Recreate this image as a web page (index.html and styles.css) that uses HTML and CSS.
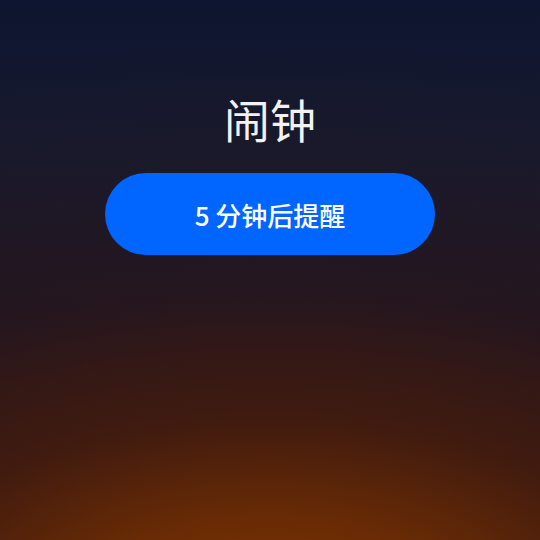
FILE: index.html
```html
<!DOCTYPE html>
<html lang="zh-CN">
<head>
 <meta charset="UTF-8">
 <meta name="viewport" content="width=device-width, initial-scale=1.0">
 <title>闹钟</title>
 <link rel="stylesheet" href="styles.css">
</head>
<body>
 <div class="alarm">
 <h1 class="alarm-title">闹钟</h1>
 <button class="snooze-button">5 分钟后提醒</button>
 </div>
</body>
</html>
```

FILE: styles.css
```css
html, body {
height: 100%;
}
body {
margin: 0;
font-family: "Noto Sans CJK SC", "Noto Sans", Roboto, sans-serif;
background-color: #1c1622;
background-image:
 radial-gradient(ellipse 640px 300px at 50% 112%, rgba(128,52,0,1) 0%, rgba(108,44,4,0.92) 30%, rgba(70,28,12,0.7) 62%, rgba(40,22,28,0) 100%),
 radial-gradient(ellipse 900px 560px at 50% 110%, rgba(62,26,18,0.75) 0%, rgba(42,22,28,0.35) 60%, rgba(30,22,34,0) 100%),
 linear-gradient(to bottom, #0e1530 0%, #171a2e 30%, #22161f 60%, #2a1614 100%);
}
.alarm {
display: flex;
flex-direction: column;
align-items: center;
padding-top: 91px;
}
.alarm-title {
margin: 0;
font-size: 46px;
font-weight: 400;
line-height: 54px;
color: #f2f2f2;
}
.snooze-button {
margin-top: 28px;
width: 330px;
height: 82px;
border: none;
border-radius: 41px;
background: #0066ff;
color: white;
font-family: inherit;
font-size: 26px;
font-weight: 500;
cursor: pointer;
}
```
